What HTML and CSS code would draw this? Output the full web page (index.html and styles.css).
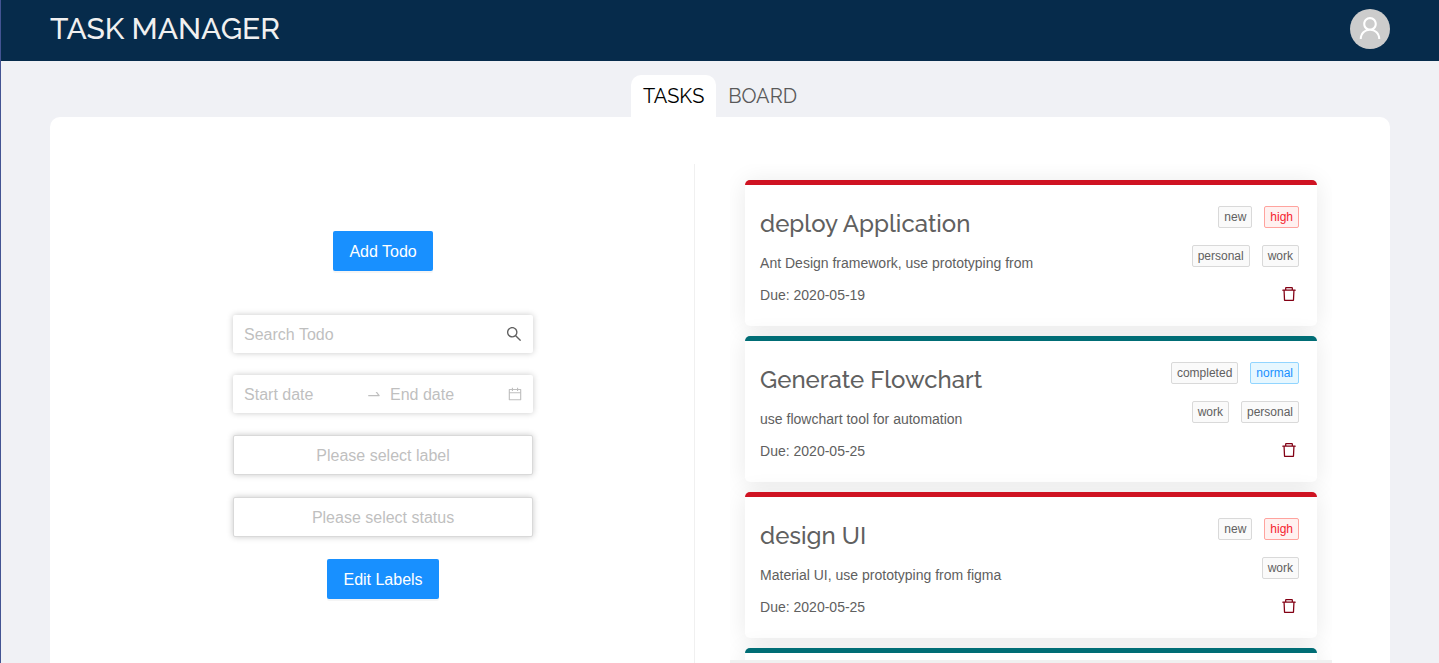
FILE: index.html
```html
<!DOCTYPE html>
<html lang="en">
<head>
<meta charset="utf-8">
<meta name="viewport" content="width=device-width, initial-scale=1">
<title>Task Manager</title>
<link rel="stylesheet" href="styles.css">
</head>
<body>
<svg class="sprite" aria-hidden="true">
  <symbol id="user" viewBox="0 0 1024 1024"><path d="M858.5 763.6a374 374 0 00-80.6-119.5 375.63 375.63 0 00-119.5-80.6c-.4-.2-.8-.3-1.2-.5C719.5 518 760 444.7 760 362c0-137-111-248-248-248S264 225 264 362c0 82.7 40.5 156 102.8 201.1-.4.2-.8.3-1.2.5-44.8 18.9-85 46-119.5 80.6a375.63 375.63 0 00-80.6 119.5A371.7 371.7 0 00136 901.8a8 8 0 008 8.2h60c4.4 0 7.9-3.5 8-7.8 2-77.2 33-149.5 87.8-204.3 56.7-56.7 132-87.9 212.2-87.9s155.5 31.2 212.2 87.9C779 752.7 810 825 812 902.2c.1 4.4 3.6 7.8 8 7.8h60a8 8 0 008-8.2c-1-47.8-10.9-94.3-29.5-138.2zM512 534c-45.9 0-89.1-17.9-121.6-50.4S340 407.9 340 362c0-45.9 17.9-89.1 50.4-121.6S466.1 190 512 190s89.1 17.9 121.6 50.4S684 316.1 684 362c0 45.9-17.9 89.1-50.4 121.6S557.9 534 512 534z"/></symbol>
  <symbol id="search" viewBox="0 0 1024 1024"><path d="M909.6 854.5L649.9 594.8C690.2 542.7 712 479 712 412c0-80.2-31.3-155.4-87.9-212.1-56.6-56.7-132-87.9-212.1-87.9s-155.5 31.3-212.1 87.9C143.2 256.5 112 331.8 112 412c0 80.1 31.3 155.5 87.9 212.1C256.5 680.8 331.8 712 412 712c67 0 130.6-21.8 182.7-62l259.7 259.6a8.2 8.2 0 0011.6 0l43.6-43.5a8.2 8.2 0 000-11.6zM570.4 570.4C528 612.7 471.8 636 412 636s-116-23.3-158.4-65.6C211.3 528 188 471.8 188 412s23.3-116.1 65.6-158.4C296 211.3 352.2 188 412 188s116.1 23.2 158.4 65.6S636 352.2 636 412s-23.3 116.1-65.6 158.4z"/></symbol>
  <symbol id="calendar" viewBox="0 0 1024 1024"><path d="M880 184H712v-64c0-4.4-3.6-8-8-8h-56c-4.4 0-8 3.6-8 8v64H384v-64c0-4.4-3.6-8-8-8h-56c-4.4 0-8 3.6-8 8v64H144c-17.7 0-32 14.3-32 32v664c0 17.7 14.3 32 32 32h736c17.7 0 32-14.3 32-32V216c0-17.7-14.3-32-32-32zm-40 656H184V460h656v380zM184 392V256h128v48c0 4.4 3.6 8 8 8h56c4.4 0 8-3.6 8-8v-48h256v48c0 4.4 3.6 8 8 8h56c4.4 0 8-3.6 8-8v-48h128v136H184z"/></symbol>
  <symbol id="swap-right" viewBox="0 0 1024 1024"><path d="M873.1 596.2l-164-208A32 32 0 00684 376h-64.8c-6.7 0-10.4 7.7-6.3 13l144.3 183H152c-4.4 0-8 3.6-8 8v60c0 4.4 3.6 8 8 8h695.9c26.8 0 41.7-30.8 25.2-51.8z"/></symbol>
  <symbol id="delete" viewBox="0 0 1024 1024"><path d="M360 184h-8c4.4 0 8-3.6 8-8v8h304v-8c0 4.4 3.6 8 8 8h-8v72h72v-80c0-35.3-28.7-64-64-64H352c-35.3 0-64 28.7-64 64v80h72v-72zm504 72H160c-17.7 0-32 14.3-32 32v32c0 4.4 3.6 8 8 8h60.4l24.7 523c1.6 34.1 29.8 61 63.9 61h454c34.2 0 62.3-26.8 63.9-61l24.7-523H888c4.4 0 8-3.6 8-8v-32c0-17.7-14.3-32-32-32zM731.3 840H292.7l-24.2-512h487l-24.2 512z"/></symbol>
</svg>

<div class="page">
  <header class="header">
    <h1 class="brand">TASK MANAGER</h1>
    <button class="avatar" type="button" aria-label="Account"><svg class="avatar-icon"><use href="#user"/></svg></button>
  </header>

  <nav class="tabs" aria-label="Views">
    <a class="tab tab-active" href="#tasks" aria-current="page">TASKS</a>
    <a class="tab" href="#board">BOARD</a>
  </nav>

  <main class="panel" id="tasks">
    <form class="filters">
      <button class="btn btn-add" type="button">Add Todo</button>
      <div class="field">
        <input class="field-input" type="text" placeholder="Search Todo" aria-label="Search Todo">
        <svg class="icon-search"><use href="#search"/></svg>
      </div>
      <div class="field">
        <input class="field-input" type="text" placeholder="Start date" aria-label="Start date">
        <svg class="icon-date"><use href="#swap-right"/></svg>
        <input class="field-input field-end" type="text" placeholder="End date" aria-label="End date">
        <svg class="icon-date"><use href="#calendar"/></svg>
      </div>
      <select class="select" aria-label="Label"><option>Please select label</option></select>
      <select class="select" aria-label="Status"><option>Please select status</option></select>
      <button class="btn" type="button">Edit Labels</button>
    </form>

    <section class="results" aria-label="Todos">
      <div class="list">
        <article class="card card-high">
          <div class="card-text">
            <h2 class="card-title">deploy Application</h2>
            <p class="card-line">Ant Design framework, use prototyping from</p>
            <p class="card-line">Due: 2020-05-19</p>
          </div>
          <div class="card-side">
            <div class="tags"><span class="tag">new</span><span class="tag tag-high">high</span></div>
            <div class="tags"><span class="tag">personal</span><span class="tag">work</span></div>
            <button class="delete" type="button" aria-label="Delete todo"><svg class="icon-delete"><use href="#delete"/></svg></button>
          </div>
        </article>
        <article class="card card-normal">
          <div class="card-text">
            <h2 class="card-title">Generate Flowchart</h2>
            <p class="card-line">use flowchart tool for automation</p>
            <p class="card-line">Due: 2020-05-25</p>
          </div>
          <div class="card-side">
            <div class="tags"><span class="tag">completed</span><span class="tag tag-normal">normal</span></div>
            <div class="tags"><span class="tag">work</span><span class="tag">personal</span></div>
            <button class="delete" type="button" aria-label="Delete todo"><svg class="icon-delete"><use href="#delete"/></svg></button>
          </div>
        </article>
        <article class="card card-high">
          <div class="card-text">
            <h2 class="card-title">design UI</h2>
            <p class="card-line">Material UI, use prototyping from figma</p>
            <p class="card-line">Due: 2020-05-25</p>
          </div>
          <div class="card-side">
            <div class="tags"><span class="tag">new</span><span class="tag tag-high">high</span></div>
            <div class="tags"><span class="tag">work</span></div>
            <button class="delete" type="button" aria-label="Delete todo"><svg class="icon-delete"><use href="#delete"/></svg></button>
          </div>
        </article>
        <article class="card card-normal"></article>
      </div>
    </section>
  </main>
</div>
</body>
</html>
```

FILE: styles.css
```css
* {
  box-sizing: border-box;
}

body {
  margin: 0;
  background: #f0f1f5;
  color: #606060;
  font: 14px/22px "Liberation Sans", Arial, sans-serif;
}

h1,
h2,
p {
  margin: 0;
  font-weight: 400;
}

button,
input,
select {
  font: inherit;
}

svg {
  display: block;
  flex: none;
  fill: currentColor;
}

.sprite {
  position: absolute;
  width: 0;
  height: 0;
}

.page {
  display: flex;
  flex-direction: column;
  height: 100vh;
  border-left: 1px solid #435493;
}

.header {
  display: flex;
  flex: none;
  align-items: center;
  justify-content: space-between;
  padding: 9px 49px 12px;
  background: #062b4b;
}

.brand {
  color: #f0f0f0;
  font: 500 30px/40px Raleway, Lato, sans-serif;
}

.avatar {
  display: flex;
  align-items: center;
  justify-content: center;
  width: 40px;
  height: 40px;
  padding: 0 0 2px;
  border: 0;
  border-radius: 50%;
  background: #ccc;
  color: #fff;
}

.avatar-icon {
  width: 28px;
  height: 28px;
}

.tabs {
  display: flex;
  flex: none;
  justify-content: center;
  padding-top: 14px;
}

.tab {
  padding: 0 12px;
  border-radius: 10px 10px 0 0;
  color: #595959;
  font: 400 20px/42px Raleway, Lato, sans-serif;
  text-decoration: none;
}

.tab-active {
  background: #fff;
  color: #000;
}

.panel {
  display: grid;
  flex: 1;
  grid-template-columns: 48fr 52fr;
  min-height: 0;
  margin: 0 49px;
  padding: 47px 22px 0;
  border-radius: 10px 10px 0 0;
  background: #fff;
}

.filters {
  display: flex;
  flex-direction: column;
  align-items: center;
  gap: 22px;
  padding-top: 67px;
}

.btn {
  height: 40px;
  padding: 2px 16px 0;
  border: 0;
  border-radius: 2px;
  background: #1890ff;
  box-shadow: 0 2px 0 rgba(0, 0, 0, 0.04);
  color: #fff;
  font-size: 16px;
}

.btn-add {
  margin-bottom: 22px;
}

.field {
  display: flex;
  align-items: center;
  width: 300px;
  max-width: 100%;
  height: 38px;
  padding: 0 10px 0 11px;
  border-radius: 2px;
  background: #fff;
  box-shadow: 0 0 6px rgba(0, 0, 0, 0.22);
}

.field-input {
  flex: 1;
  width: 0;
  min-width: 0;
  padding: 2px 0 0;
  border: 0;
  outline: 0;
  background: none;
  font-size: 16px;
}

.field-end {
  flex: 0 1 117px;
  margin-left: 8px;
}

.field-input::placeholder {
  color: #bfbfbf;
  opacity: 1;
}

.icon-search {
  width: 18px;
  height: 18px;
}

.icon-date {
  width: 16px;
  height: 16px;
  color: #bfbfbf;
}

.select {
  appearance: none;
  width: 300px;
  max-width: 100%;
  height: 40px;
  padding: 2px 11px 0;
  border: 1px solid #d9d9d9;
  border-radius: 2px;
  background: #fff;
  box-shadow: 0 0 6px rgba(0, 0, 0, 0.22);
  color: #bfbfbf;
  font-size: 16px;
  text-align: center;
  text-align-last: center;
}

.results {
  display: flex;
  min-height: 0;
  padding: 0 36px 0 35px;
  border-left: 1px solid #f0f0f0;
}

.list {
  display: flex;
  flex: 1;
  flex-direction: column;
  gap: 10px;
  padding: 16px 15px 0;
  border-bottom: 3px solid #f0f0f0;
  overflow-y: auto;
  scrollbar-width: none;
}

.card {
  display: flex;
  flex: none;
  justify-content: space-between;
  min-height: 146px;
  padding: 21px 18px 20px 15px;
  border-top: 5px solid;
  border-radius: 5px;
  background: #fff;
  box-shadow: 0 2px 24px rgba(0, 0, 0, 0.09);
}

.card-high {
  border-color: #cf1322;
}

.card-normal {
  border-color: #006d75;
}

.card-text {
  display: flex;
  flex-direction: column;
  gap: 10px;
}

.card-title {
  font: 500 24px/36px Raleway, Lato, sans-serif;
}

.card-side {
  display: flex;
  flex-direction: column;
  align-items: flex-end;
  gap: 17px;
}

.tags {
  display: flex;
  gap: 12px;
}

.tag {
  padding: 0 5px;
  border: 1px solid #d9d9d9;
  border-radius: 2px;
  background: #fafafa;
  font-size: 12px;
  line-height: 20px;
}

.tag-high {
  border-color: #ffa39e;
  background: #fff1f0;
  color: #f5222d;
}

.tag-normal {
  border-color: #91d5ff;
  background: #e6f7ff;
  color: #1890ff;
}

.delete {
  display: flex;
  align-items: center;
  justify-content: center;
  width: 20px;
  height: 20px;
  padding: 0;
  border: 0;
  background: none;
  color: #820014;
}

.icon-delete {
  width: 18px;
  height: 18px;
}
```
